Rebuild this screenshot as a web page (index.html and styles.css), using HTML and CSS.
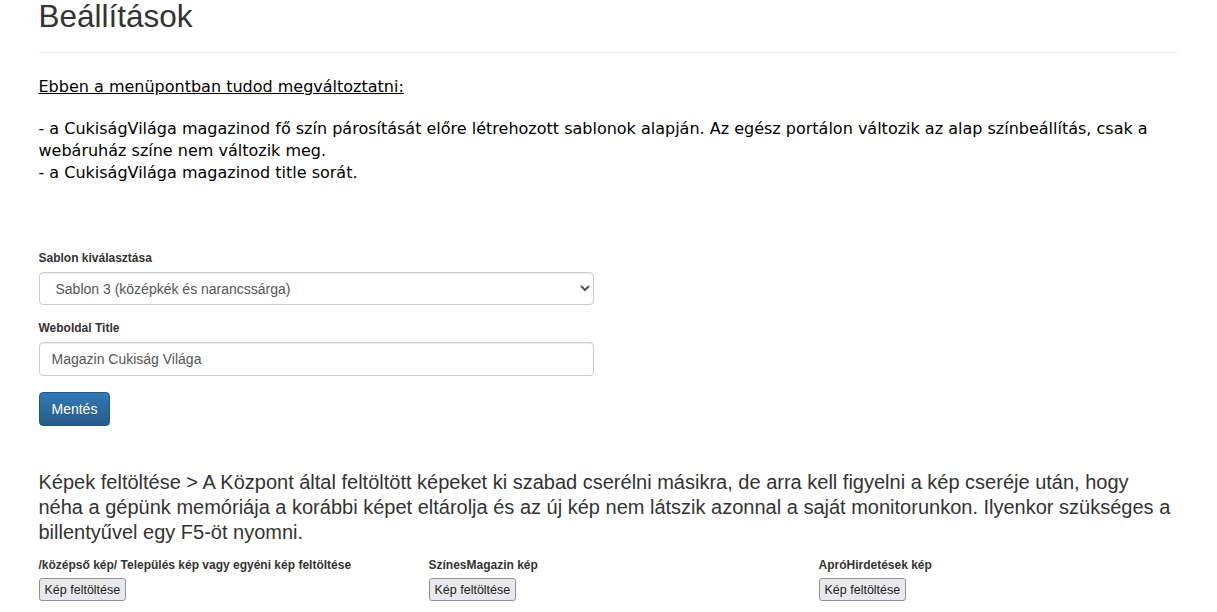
FILE: index.html
```html
<!DOCTYPE html>
<html lang="hu">
<head>
  <meta charset="UTF-8" />
  <title>Beállítások</title>
  <link rel="stylesheet" href="styles.css">
</head>
<body>
  <div class="container">
    <div class="page-header">
      <h2>Beállítások</h2>
    </div>

    <div class="intro">
      <p class="intro-title">Ebben a menüpontban tudod megváltoztatni:</p>
      <p>
        - a CukiságVilága magazinod fő szín párosítását előre létrehozott sablonok alapján. Az egész portálon változik az alap színbeállítás, csak a webáruház színe nem változik meg.<br>
        - a CukiságVilága magazinod title sorát.
      </p>
    </div>

    <form class="settings-form">
      <div class="form-group">
        <label for="sablon">Sablon kiválasztása</label>
        <select id="sablon" class="form-control">
          <option>Sablon 1</option>
          <option>Sablon 2</option>
          <option selected>Sablon 3 (középkék és narancssárga)</option>
        </select>
      </div>
      <div class="form-group">
        <label for="title">Weboldal Title</label>
        <input id="title" class="form-control form-input" type="text" value="Magazin Cukiság Világa">
      </div>
      <button type="submit" class="btn-primary">Mentés</button>
    </form>

    <p class="upload-info">Képek feltöltése &gt; A Központ által feltöltött képeket ki szabad cserélni másikra, de arra kell figyelni a kép cseréje után, hogy néha a gépünk memóriája a korábbi képet eltárolja és az új kép nem látszik azonnal a saját monitorunkon. Ilyenkor szükséges a billentyűvel egy F5-öt nyomni.</p>

    <div class="upload-row">
      <div class="upload-col">
        <label>/középső kép/ Település kép vagy egyéni kép feltöltése</label>
        <button type="button" class="btn-upload">Kép feltöltése</button>
      </div>
      <div class="upload-col">
        <label>SzínesMagazin kép</label>
        <button type="button" class="btn-upload">Kép feltöltése</button>
      </div>
      <div class="upload-col">
        <label>ApróHirdetések kép</label>
        <button type="button" class="btn-upload">Kép feltöltése</button>
      </div>
    </div>
  </div>
</body>
</html>
```

FILE: styles.css
```css
* {
  box-sizing: border-box;
}

body {
  margin: 0;
  font-family: 'Liberation Sans', Arial, sans-serif;
  font-size: 14px;
  color: #333;
  background: #fff;
}

.container {
  width: 1170px;
  margin: 0 auto;
  padding: 0 15px;
}

.page-header {
  border-bottom: 1px solid #eee;
  padding-bottom: 19px;
  margin-bottom: 23px;
}

.page-header h2 {
  margin: 0;
  font-size: 31.5px;
  font-weight: 500;
  line-height: 33px;
}

.intro {
  font-family: 'DejaVu Sans', Verdana, sans-serif;
  font-size: 16px;
  line-height: 22px;
  color: #000;
  margin-bottom: 67px;
}

.intro p {
  margin: 0 0 22px;
}

.intro .intro-title {
  text-decoration: underline;
  margin-bottom: 20px;
}

.settings-form {
  width: 555px;
  margin-bottom: 44px;
}

.form-group {
  margin-bottom: 16px;
}

label {
  display: block;
  font-size: 12px;
  font-weight: bold;
  margin-bottom: 7px;
}

.form-control {
  display: block;
  width: 100%;
  height: 33px;
  padding: 6px 12px;
  font-family: inherit;
  font-size: 14px;
  color: #555;
  background: #fff;
  border: 1px solid #ccc;
  border-radius: 4px;
  box-shadow: inset 0 1px 1px rgba(0, 0, 0, 0.075);
}

.form-input {
  height: 34px;
}

.btn-primary {
  padding: 6px 12px;
  height: 34px;
  font-family: inherit;
  font-size: 14px;
  color: #fff;
  background: linear-gradient(to bottom, #337ab7 0, #265a88 100%);
  border: 1px solid #245580;
  border-radius: 4px;
  cursor: pointer;
}

.upload-info {
  font-size: 20px;
  line-height: 25px;
  margin: 0 0 13px;
}

.upload-row {
  display: grid;
  grid-template-columns: repeat(3, 1fr);
  margin: 0 -15px;
}

.upload-col {
  padding: 0 15px;
}

.upload-col label {
  margin-bottom: 6px;
}

.btn-upload {
  height: 23px;
  font-family: inherit;
  font-size: 12.5px;
  padding: 2px 5px;
  color: #222;
  background: #e9e9ed;
  border: 1px solid #8f8f9d;
  border-radius: 3px;
}
```
